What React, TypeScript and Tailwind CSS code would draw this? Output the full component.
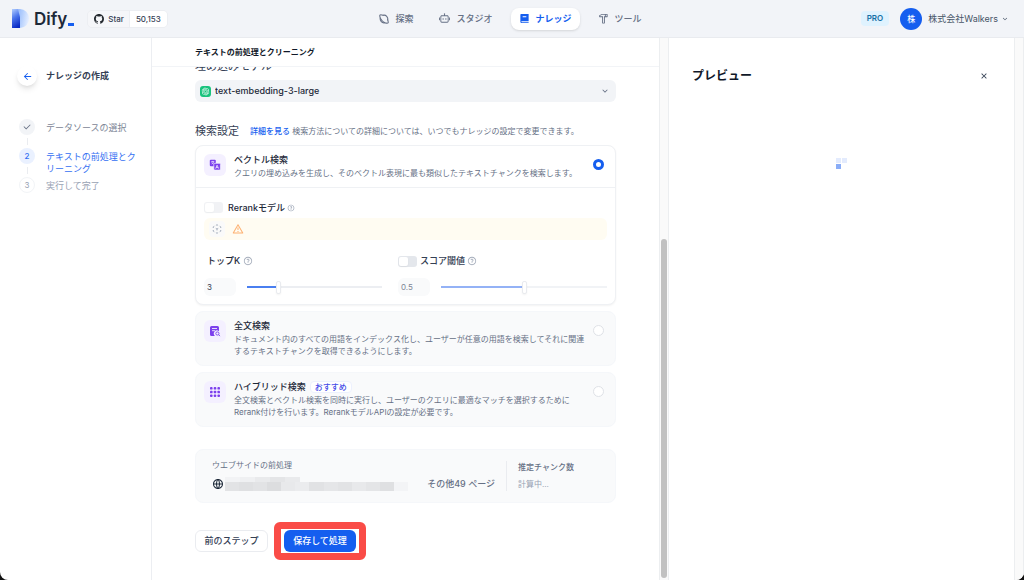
import { useState } from 'react';
import type { ReactNode } from 'react';
import {
  RiAlertLine,
  RiArrowDownSLine,
  RiArrowLeftLine,
  RiBook2Fill,
  RiCheckLine,
  RiCloseLine,
  RiGithubFill,
  RiGlobalLine,
  RiHammerLine,
  RiOpenaiFill,
  RiQuestionLine,
  RiRobot2Line,
} from 'react-icons/ri';

function ExploreIcon() {
  return (
    <svg viewBox="0 0 18 18" className="size-[10px]" fill="none" stroke="currentColor" strokeWidth="2" strokeLinecap="round" strokeLinejoin="round" aria-hidden="true">
      <path d="M7.500 2.300A6.800 6.800 0 0 1 15.700 10.500M10.500 15.700A6.800 6.800 0 0 1 2.300 7.500" />
      <path d="M7.500 2.300C4.500 1.200 2.200 1.200 1.700 1.900 1.200 2.600 1.400 4.800 2.300 7.500 4.500 11.500 7 14 10.500 15.700 13.500 16.700 15.600 16.700 16.200 16.100 16.800 15.500 16.700 13.500 15.700 10.500" />
    </svg>
  );
}

function DifyMark() {
  return (
    <svg viewBox="0 0 17 19" className="h-[19px] w-[17px]" aria-hidden="true">
      <defs>
        <linearGradient id="stem" x1="0.2" y1="0" x2="0.5" y2="1">
          <stop offset="0" stopColor="#a9c6fd" />
          <stop offset="0.45" stopColor="#4b75ec" />
          <stop offset="1" stopColor="#0a2bc4" />
        </linearGradient>
        <linearGradient id="bowl" x1="0" y1="0.2" x2="1" y2="0.4">
          <stop offset="0" stopColor="#7fa8fa" />
          <stop offset="0.6" stopColor="#b4cffd" />
          <stop offset="1" stopColor="#e3edff" />
        </linearGradient>
      </defs>
      <path d="M0 0H8a9 9.500 0 0 1 0 19V10H0Z" fill="url(#bowl)" />
      <path d="M0 0H6L8 8V19H0Z" fill="url(#stem)" />
    </svg>
  );
}

function VectorIcon() {
  return (
    <svg viewBox="0 0 12 12" className="size-3" aria-hidden="true">
      <rect x="0.800" y="0.800" width="6" height="6.500" rx="1" fill="#7c3fed" />
      <rect x="4.800" y="4.300" width="6.600" height="6.800" rx="1" fill="#7c3fed" stroke="#f4f0ff" strokeWidth="0.700" />
      <path d="M2.200 2.600h3M3.700 1.900v.7M2.600 5c1.300-.5 1.900-1.300 2.100-2.400M2.700 3.300c.4.8 1 1.300 1.900 1.600" stroke="#fff" strokeWidth="0.600" fill="none" />
      <path d="M6.600 9.600 8.100 6.200 9.600 9.600M7.100 8.600h2" stroke="#fff" strokeWidth="0.700" fill="none" />
    </svg>
  );
}

function FullTextIcon() {
  return (
    <svg viewBox="0 0 12 12" className="size-3" aria-hidden="true">
      <path d="M2.500 1h6A1.500 1.500 0 0 1 10 2.500V6.200A3 3 0 0 0 6 11H2.500A1.500 1.500 0 0 1 1 9.500v-7A1.500 1.500 0 0 1 2.500 1Z" fill="#7c3fed" />
      <path d="M3 3.500h5M3 5.700h3" stroke="#fff" strokeWidth="0.800" />
      <circle cx="8.400" cy="8.500" r="1.600" fill="none" stroke="#7c3fed" strokeWidth="0.900" />
      <path d="m9.600 9.700 1.400 1.400" stroke="#7c3fed" strokeWidth="0.900" />
    </svg>
  );
}

function HybridIcon() {
  return (
    <svg viewBox="0 0 12 12" className="size-3" fill="#7c3fed" aria-hidden="true">
      {[1, 4.7, 8.4].map((y) => [1, 4.7, 8.4].map((x) => <rect key={`${x}-${y}`} x={x} y={y} width="2.6" height="2.6" rx="0.9" />))}
    </svg>
  );
}

function ModelIcon() {
  return (
    <svg viewBox="0 0 12 12" className="size-[10px] text-[#98a2b3]" fill="none" stroke="currentColor" strokeWidth="1" aria-hidden="true">
      <path d="M4.700 1.600 6 .9l1.300.7M9.200 2.700l1.300.7v1.400M10.500 7.200v1.400l-1.300.7M7.300 10.400 6 11.100l-1.300-.7M2.800 9.300l-1.300-.7V7.200M1.500 4.800V3.400l1.300-.7M4.500 5.200 6 6l1.500-.8M6 6v1.700" />
    </svg>
  );
}

function Step({ mark, label, tone, last }: { mark: ReactNode; label: string; tone: string; last?: boolean }) {
  return (
    <li className="flex gap-[11px]">
      <div className="flex shrink-0 flex-col items-center">
        {mark}
        {!last && <span className="my-[3px] h-[7px] w-px bg-[#eaecf0]" />}
      </div>
      <span className={`pt-[3px] text-[9px] leading-3 ${tone}`}>{label}</span>
    </li>
  );
}

type MethodProps = {
  id: string;
  title: string;
  badge?: string;
  text: string;
  icon: ReactNode;
  selected: boolean;
  onSelect: () => void;
  children?: ReactNode;
};

function Method({ id, title, badge, text, icon, selected, onSelect, children }: MethodProps) {
  return (
    <section className={`rounded-lg border ${selected ? 'border-[#eff1f4] bg-white shadow-xs' : 'border-[#f5f7fa] bg-[#f9fafb]'}`}>
      <label htmlFor={id} className="flex items-start gap-2 py-2 pr-[11px] pl-2">
        <span className="flex size-[22px] shrink-0 items-center justify-center rounded-md bg-[#f4f0ff]">{icon}</span>
        <span className="flex min-w-0 flex-1 flex-col gap-px">
          <span className="flex h-3 items-center gap-1 text-[9px] leading-3 font-medium text-[#1d2939]">
            {title}
            {badge && <span className="rounded-sm border border-[#edf1fe] bg-white px-1 text-[8px] leading-[10px] text-[#444ce7]">{badge}</span>}
          </span>
          <span className="text-[8px] leading-3 text-[#667085]">{text}</span>
        </span>
        <input
          id={id}
          type="radio"
          name="method"
          checked={selected}
          onChange={onSelect}
          className="mt-[5px] -ml-1 size-[11px] shrink-0 appearance-none rounded-full border border-[#dfe2e7] bg-white checked:border-[3px] checked:border-[#155eef]"
        />
      </label>
      {children}
    </section>
  );
}

const switchClass =
  "h-[11px] w-[19px] shrink-0 appearance-none rounded-[3px] bg-[#e4e7ec] p-px before:block before:size-[9px] before:rounded-xs before:bg-white before:shadow-xs before:content-[''] checked:bg-[#155eef] checked:before:translate-x-2";

const sliderClass =
  'h-[13px] w-full min-w-0 appearance-none bg-transparent bg-[length:100%_2px] bg-center bg-no-repeat [&::-webkit-slider-thumb]:h-[13px] [&::-webkit-slider-thumb]:w-[5px] [&::-webkit-slider-thumb]:appearance-none [&::-webkit-slider-thumb]:rounded-xs [&::-webkit-slider-thumb]:border [&::-webkit-slider-thumb]:border-[#e9ebef] [&::-webkit-slider-thumb]:bg-white [&::-webkit-slider-thumb]:shadow-xs';

const numberClass = 'h-[18px] w-8 shrink-0 rounded-md bg-[#f9fafb] px-[3px] text-[8px]';

function VectorSettings() {
  const [topK, setTopK] = useState(3);
  const [score, setScore] = useState(0.5);
  const topFill = ((topK - 1) / 9) * 100;
  return (
    <div className="border-t border-[#eff1f4] px-2 pt-[14px] pb-2">
      <div className="flex items-center">
        <input id="rerank" type="checkbox" role="switch" className={`${switchClass} opacity-50`} />
        <label htmlFor="rerank" className="ml-[5px] text-[9px] leading-[11px] font-medium text-[#1d2939]">Rerankモデル</label>
        <RiQuestionLine className="ml-[2px] size-2 text-[#98a2b3]" />
      </div>
      <div className="mt-[5px] flex h-[22px] items-center gap-[7px] rounded-md bg-[#fffcf2] px-[5px]">
        <span className="flex size-4 items-center justify-center rounded-sm bg-[#fafafa]"><ModelIcon /></span>
        <RiAlertLine className="size-3 text-[#fdb071]" />
      </div>
      <div className="mt-[15px] grid grid-cols-[178fr_209fr] gap-x-4">
        <div>
          <div className="flex h-3 items-center gap-[3px] pl-[3px] text-[9px] leading-3 font-medium text-[#1d2939]">
            <label htmlFor="topk">トップK</label>
            <RiQuestionLine className="size-[10px] text-[#a5adbb]" />
          </div>
          <div className="mt-[11px] flex items-center gap-[11px]">
            <input id="topk" value={topK} onChange={(e) => setTopK(Number(e.target.value) || 1)} className={`${numberClass} text-[#344054]`} />
            <input
              type="range" min="1" max="10" value={topK} aria-label="トップK"
              onChange={(e) => setTopK(Number(e.target.value))}
              style={{ backgroundImage: `linear-gradient(to right, #4a7ff0 ${topFill}%, #eceef2 ${topFill}%)` }}
              className={sliderClass}
            />
          </div>
        </div>
        <div>
          <div className="flex h-3 items-center text-[9px] leading-3 font-medium text-[#344054]">
            <input id="threshold" type="checkbox" role="switch" className={switchClass} />
            <label htmlFor="threshold" className="ml-[3px]">スコア閾値</label>
            <RiQuestionLine className="ml-[2px] size-[10px] text-[#a5adbb]" />
          </div>
          <div className="mt-[11px] flex items-center gap-[11px]">
            <input value={score} aria-label="スコア閾値" onChange={(e) => setScore(Number(e.target.value) || 0)} className={`${numberClass} text-[#7d8696]`} />
            <input
              type="range" min="0" max="1" step="0.01" value={score} aria-label="スコア閾値"
              onChange={(e) => setScore(Number(e.target.value))}
              style={{ backgroundImage: `linear-gradient(to right, #94b2f6 ${score * 100}%, #f1f3f6 ${score * 100}%)` }}
              className={sliderClass}
            />
          </div>
        </div>
      </div>
    </div>
  );
}

function Header() {
  const item = 'flex h-[22px] items-center gap-[6px] rounded-lg px-2';
  return (
    <header className="grid h-[38px] shrink-0 grid-cols-[1fr_auto_1fr] items-center border-b border-[#e9ebef] bg-[#f2f4f8] pr-[15px] pl-3">
      <div className="flex items-center">
        <a href="#home" className="flex items-center gap-[5px]">
          <DifyMark />
          <span className="flex items-end text-[17px] leading-[22px] font-semibold text-[#1d2939]">
            Dify<span className="mb-1 ml-px h-[3px] w-[6px] bg-[#155eef]" />
          </span>
        </a>
        <a href="#github" className="ml-[13px] flex h-[18px] overflow-hidden rounded-[5px] border border-[#eceef2] text-[8px] font-medium text-[#344054]">
          <span className="flex items-center gap-[3px] bg-[#f5f6f9] px-[5px]"><RiGithubFill className="size-3 text-[#24292f]" />Star</span>
          <span className="flex items-center border-l border-[#eceef2] bg-white px-[6px]">50,153</span>
        </a>
      </div>
      <nav className="flex gap-[10px] text-[9px] font-medium text-[#667085]">
        <a href="#explore" className={item}><ExploreIcon />探索</a>
        <a href="#studio" className={item}><RiRobot2Line className="size-[11px]" />スタジオ</a>
        <a href="#knowledge" className={`${item} bg-white font-bold text-[#155eef] shadow-sm`} aria-current="page"><RiBook2Fill className="size-[11px]" />ナレッジ</a>
        <a href="#tools" className={item}><RiHammerLine className="size-[11px]" />ツール</a>
      </nav>
      <div className="flex items-center justify-end">
        <span className="rounded-sm bg-[#dff2fe] px-[6px] text-[8px] leading-[15px] font-semibold text-[#1570a6]">PRO</span>
        <button type="button" className="ml-[11px] flex items-center text-[9px] text-[#475467]">
          <span className="mr-[6px] flex size-[22px] items-center justify-center rounded-full bg-[#155eef] text-[8px] font-medium text-white">株</span>
          株式会社Walkers
          <RiArrowDownSLine className="ml-[3px] size-2" />
        </button>
      </div>
    </header>
  );
}

const mosaicTop = ['bg-[#f2f3f5]', 'bg-[#eff0f2]', 'bg-[#e9eaec]', 'bg-[#e4e5e7]', 'bg-[#e9eaec]'];
const mosaicBottom = [
  'bg-[#e2e3e5]', 'bg-[#dfe0e2]', 'bg-[#e2e3e5]', 'bg-[#dcdddf]', 'bg-[#e8e9eb]', 'bg-[#ebecee]', 'bg-[#e1e2e4]',
  'bg-[#e5e6e8]', 'bg-[#e2e3e5]', 'bg-[#e8e9eb]', 'bg-[#e4e5e7]', 'bg-[#dfe0e2]', 'bg-[#f3f4f6]',
];

export default function App() {
  const [method, setMethod] = useState('vector');
  return (
    <div className="bg-[#111]">
      <div className="flex min-h-screen flex-col overflow-hidden rounded-b-lg bg-white font-['Inter','Noto_Sans_CJK_JP',sans-serif] text-[#344054]">
        <Header />
        <div className="flex flex-1">
          <aside className="w-[152px] shrink-0 border-r border-[#eceef2] pt-[28px] pr-[14px]">
            <div className="flex items-center gap-[9px] pl-[17px]">
              <button type="button" aria-label="戻る" className="flex size-5 items-center justify-center rounded-full bg-white text-[#155eef] shadow-md">
                <RiArrowLeftLine className="size-[11px]" />
              </button>
              <h1 className="text-[9px] leading-3 font-bold text-[#344054]">ナレッジの作成</h1>
            </div>
            <ol className="mt-[33px] pl-[19px]">
              <Step
                label="データソースの選択"
                tone="text-[#7d8696]"
                mark={<span className="flex size-4 items-center justify-center rounded-full bg-[#f2f4f7] text-[#667085]"><RiCheckLine className="size-[10px]" /></span>}
              />
              <Step
                label="テキストの前処理とクリーニング"
                tone="text-[#3570f2]"
                mark={<span className="flex size-4 items-center justify-center rounded-full bg-[#eaf1ff] text-[8px] font-medium text-[#3570f2]">2</span>}
              />
              <Step
                last
                label="実行して完了"
                tone="text-[#98a2b3]"
                mark={<span className="flex size-4 items-center justify-center rounded-full border border-[#f2f4f7] text-[8px] text-[#98a2b3]">3</span>}
              />
            </ol>
          </aside>

          <main className="min-w-0 flex-[507]">
            <h2 className="relative border-b border-[#f2f4f7] bg-white px-[43px] text-[8px] leading-7 font-bold text-[#101828]">テキストの前処理とクリーニング</h2>
            <div className="px-[43px] pt-px pb-5">
              <label htmlFor="model" className="-mt-[10px] block text-[11px] leading-4 text-[#344054]">埋め込みモデル</label>
              <div className="mt-[6px] grid h-[22px] grid-cols-[1fr] items-center">
                <select id="model" className="col-start-1 row-start-1 h-[22px] w-full appearance-none rounded-md bg-[#f2f4f7] pl-5 text-[9px] font-medium text-[#1d2939]">
                  <option>text-embedding-3-large</option>
                </select>
                <span className="pointer-events-none col-start-1 row-start-1 flex items-center justify-between pr-[6px] pl-[5px]">
                  <span className="flex size-[11px] items-center justify-center rounded-[3px] bg-[#19c37d] text-white"><RiOpenaiFill className="size-[9px]" /></span>
                  <RiArrowDownSLine className="size-[10px] text-[#667085]" />
                </span>
              </div>

              <div className="mt-[21px] flex items-center gap-[11px]">
                <h3 className="text-[11px] leading-4">検索設定</h3>
                <p className="text-[8px] leading-4 text-[#667085]">
                  <a href="#docs" className="font-medium text-[#155eef]">詳細を見る</a> 検索方法についての詳細については、いつでもナレッジの設定で変更できます。
                </p>
              </div>

              <div className="mt-[6px] flex flex-col gap-[6px]">
                <Method
                  id="vector"
                  title="ベクトル検索"
                  text="クエリの埋め込みを生成し、そのベクトル表現に最も類似したテキストチャンクを検索します。"
                  icon={<VectorIcon />}
                  selected={method === 'vector'}
                  onSelect={() => setMethod('vector')}
                >
                  <VectorSettings />
                </Method>
                <Method
                  id="fulltext"
                  title="全文検索"
                  text="ドキュメント内のすべての用語をインデックス化し、ユーザーが任意の用語を検索してそれに関連するテキストチャンクを取得できるようにします。"
                  icon={<FullTextIcon />}
                  selected={method === 'fulltext'}
                  onSelect={() => setMethod('fulltext')}
                />
                <Method
                  id="hybrid"
                  title="ハイブリッド検索"
                  badge="おすすめ"
                  text="全文検索とベクトル検索を同時に実行し、ユーザーのクエリに最適なマッチを選択するためにRerank付けを行います。RerankモデルAPIの設定が必要です。"
                  icon={<HybridIcon />}
                  selected={method === 'hybrid'}
                  onSelect={() => setMethod('hybrid')}
                />
              </div>

              <section className="mt-[22px] flex rounded-lg border border-[#f5f7fa] bg-[#f9fafb] px-4 py-[9px] text-[#667085]">
                <div className="flex-1">
                  <h4 className="text-[8px] leading-3">ウエブサイドの前処理</h4>
                  <div className="mt-1 flex h-[18px] items-center justify-between">
                    <div className="flex items-center gap-px">
                      <RiGlobalLine className="size-3 text-[#1d2939]" />
                      <div className="w-[183px]" aria-hidden="true">
                        <div className="flex h-[5px]">{mosaicTop.map((c, i) => <span key={i} className={`w-[15px] ${c}`} />)}</div>
                        <div className="flex h-[9px]">{mosaicBottom.map((c, i) => <span key={i} className={`flex-1 ${c}`} />)}</div>
                      </div>
                    </div>
                    <span className="pr-[11px] text-[9px] leading-[18px] font-medium">その他49 ページ</span>
                  </div>
                </div>
                <div className="my-[2px] w-[93px] border-l border-[#eaecf0] pl-[11px] text-[8px]">
                  <h4 className="leading-3 font-medium">推定チャンク数</h4>
                  <p className="pt-[5px] leading-3 text-[#98a2b3]">計算中...</p>
                </div>
              </section>

              <div className="mt-[27px] flex gap-4 text-[9px] font-medium">
                <button type="button" className="h-[22px] w-[73px] rounded-md border border-[#eaecf0] bg-white">前のステップ</button>
                <div className="relative">
                  <button type="button" className="h-[22px] w-[72px] rounded-md bg-[#155eef] text-white">保存して処理</button>
                  <span className="pointer-events-none absolute -inset-x-[10px] -inset-y-2 rounded-md border-[7px] border-[#fa4c47]" />
                </div>
              </div>
            </div>
          </main>

          <div className="flex w-[10px] shrink-0 flex-col items-center border-x border-[#eceef0] bg-[#fafafa] pb-[2px]" aria-hidden="true">
            <span className="flex-[201]" />
            <span className="w-[6px] flex-[339] rounded-full bg-[#c1c1c1]" />
          </div>

          <section className="min-w-0 flex-[345] pt-[30px]" aria-labelledby="preview">
            <div className="flex items-center justify-between pr-[25px] pl-[23px]">
              <h2 id="preview" className="text-[12px] leading-4 font-bold text-[#101828]">プレビュー</h2>
              <button type="button" aria-label="閉じる" className="text-[#344054]"><RiCloseLine className="size-[10px]" /></button>
            </div>
            <div className="mt-[74px] flex justify-center" role="status" aria-label="読み込み中">
              <div className="grid grid-cols-[5px_5px] gap-px">
                <span className="size-[5px] bg-[#e3ebfd]" />
                <span className="size-[5px] bg-[#e3ebfd]" />
                <span className="size-[5px] bg-[#8aadf7]" />
              </div>
            </div>
          </section>
          <div className="w-[10px] shrink-0 border-x border-[#eceef0] bg-[#fafafa]" aria-hidden="true" />
        </div>
      </div>
    </div>
  );
}
